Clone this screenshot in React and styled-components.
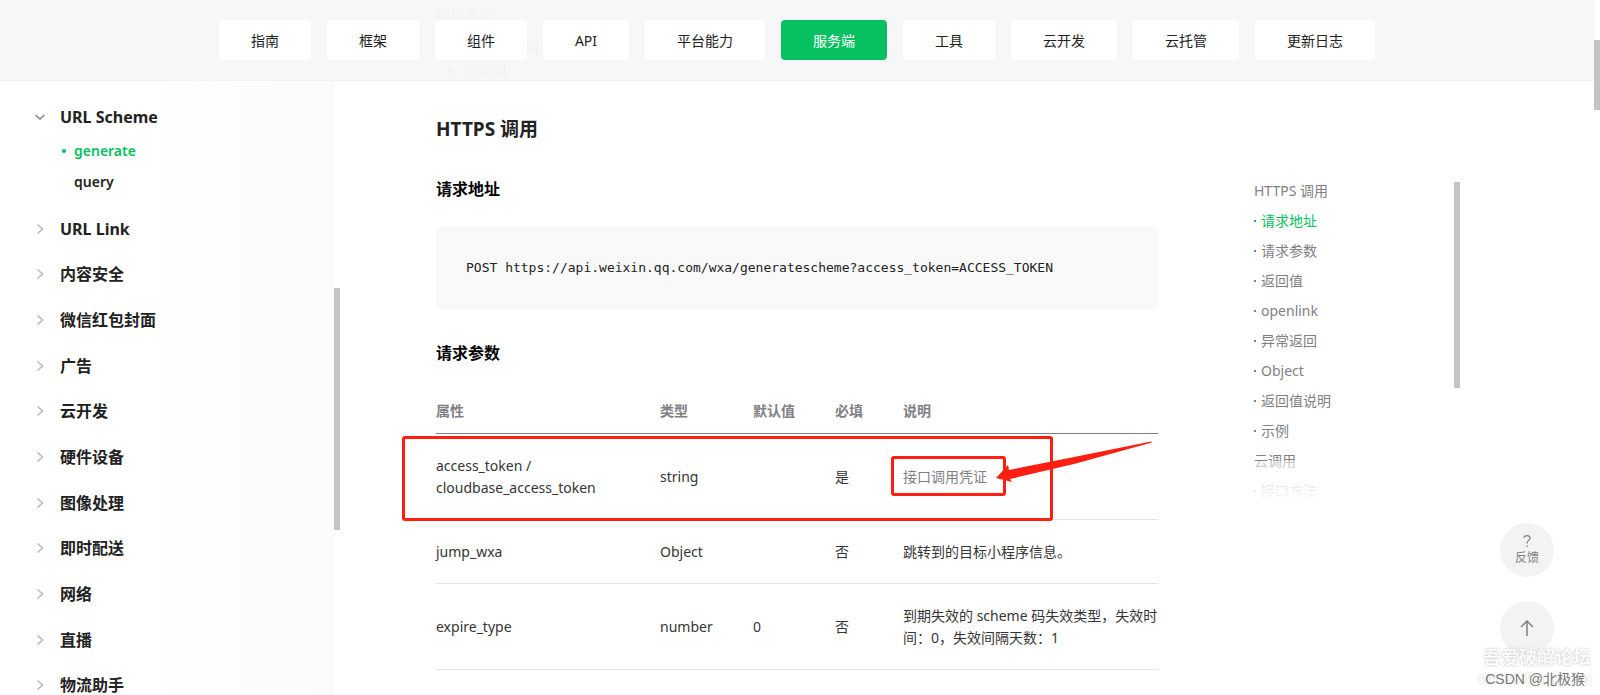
import React from 'react';
import styled, { createGlobalStyle } from 'styled-components';

const Global = createGlobalStyle`
  * { box-sizing: border-box; }
  html, body { margin: 0; height: 100%; overflow: hidden; }
  body {
    background: #fff;
    color: #353535;
    font-family: "Noto Sans", "Noto Sans CJK SC", sans-serif;
    font-size: 14px;
    line-height: 22px;
  }
  #root { height: 100%; }
  ul { list-style: none; margin: 0; padding: 0; }
  a { color: inherit; text-decoration: none; }
  button { font: inherit; border: 0; cursor: pointer; }
`;

const Page = styled.div`
  position: relative;
  height: 100vh;
  display: flex;
  flex-direction: column;
  overflow: hidden;
  padding-right: 6px;
`;

const Header = styled.header`
  position: relative;
  flex: none;
  display: flex;
  justify-content: center;
  padding: 20px 0;
  background: #f7f7f7;
  border-bottom: 1px solid #f2f2f2;
`;

const Tabs = styled.nav`
  position: relative;
  display: flex;
  gap: 16px;
`;

const Tab = styled.a`
  padding: 1px 32px 0;
  line-height: 39px;
  border-radius: 4px;
  color: ${(p) => (p.$active ? '#fff' : '#222')};
  background: ${(p) => (p.$active ? '#07c160' : '#fff')};
`;

const Underlay = styled.div`
  position: absolute;
  left: 436px;
  top: 1px;
  color: #f2f2f2;
  line-height: 28px;
  ul { list-style: disc; padding-left: 29px; }
  p { margin: 0; }
  li:first-child { line-height: 36px; }
  li:last-child { line-height: 12px; }
`;

const Body = styled.div`
  flex: 1;
  min-height: 0;
  display: flex;
`;

const Sidebar = styled.aside`
  flex: none;
  width: 340px;
  display: flex;
  overflow: hidden;
`;

const Tree = styled.nav`
  flex: 1;
  padding: 24px 0 0 37px;
  background: linear-gradient(90deg, #fff 0%, #fff 50%, #fdfdfd 50%, #fbfbfb 100%);
`;

const SideTrack = styled.div`
  width: 6px;
  padding-top: 207px;
`;

const Thumb = styled.div`
  width: 6px;
  height: ${(p) => p.$length}px;
  background: #c4c4c3;
`;

const TreeLink = styled.a`
  display: flex;
  align-items: center;
  gap: 15px;
  height: 24px;
  font-size: 16px;
  font-weight: 700;
  color: #222;
  svg { flex: none; margin-left: -2px; }
`;

const SubList = styled.ul`
  padding: 6px 0 9px 37px;
`;

const SubLink = styled.a`
  position: relative;
  display: block;
  line-height: 31px;
  font-weight: 600;
  color: ${(p) => (p.$active ? '#07c160' : '#222')};
  &::before {
    content: "";
    display: ${(p) => (p.$active ? 'block' : 'none')};
    position: absolute;
    left: -12px;
    top: 14px;
    width: 4px;
    height: 4px;
    border-radius: 2px;
    background: #07c160;
  }
`;

const Groups = styled.ul`
  display: grid;
  grid-auto-rows: 1fr;
  align-items: center;
  height: 502px;
`;

const Article = styled.main`
  flex: none;
  width: 722px;
  margin-left: 96px;
`;

const Title = styled.h2`
  margin: 34px 0 0;
  font-size: 19px;
  line-height: 28px;
  color: #222;
`;

const Subtitle = styled.h3`
  margin: 0;
  padding: ${(p) => p.$above}px 0 26px;
  font-size: 16px;
  line-height: 24px;
  color: #000;
`;

const Code = styled.pre`
  margin: 0;
  padding: 30px;
  background: #f9f9f9;
  border-radius: 4px;
  color: #222;
  font-family: "DejaVu Sans Mono", "Liberation Mono", monospace;
  font-size: 13px;
  line-height: 22px;
`;

const TableWrap = styled.div`
  position: relative;
`;

const Table = styled.table`
  width: 100%;
  table-layout: fixed;
  border-collapse: separate;
  border-spacing: 0;
  th, td { text-align: left; padding: 21px 0 20px; }
  th { padding: 9px 0 11px; color: #808084; border-bottom: 1px solid #808084; }
  td { border-bottom: 1px solid #e4e4e4; }
`;

const DocLink = styled.a`
  && { color: #808084; }
`;

const Frame = styled.div`
  position: absolute;
  left: ${(p) => p.$x}px;
  top: ${(p) => p.$y}px;
  width: ${(p) => p.$w}px;
  height: ${(p) => p.$h}px;
  border: 3px solid #ff1f12;
  border-radius: 3px;
  pointer-events: none;
`;

const Arrow = styled.svg`
  position: absolute;
  left: 558px;
  top: 46px;
  pointer-events: none;
`;

const Toc = styled.aside`
  position: relative;
  flex: none;
  display: flex;
  justify-content: space-between;
  width: 206px;
  height: 326px;
  margin: 95px 0 0 96px;
  overflow: hidden;
  &::after {
    content: "";
    position: absolute;
    left: 0;
    right: 6px;
    bottom: 0;
    height: 41px;
    background: linear-gradient(rgba(255, 255, 255, 0.5), #fff);
  }
`;

const TocTrack = styled.div`
  padding-top: 6px;
`;

const TocList = styled.ul`
  line-height: 30px;
  color: #808084;
`;

const TocLink = styled.a`
  display: flex;
  align-items: center;
  gap: 5px;
  color: ${(p) => (p.$active ? '#07c160' : '#808084')};
  &::before {
    content: "";
    display: ${(p) => (p.$sub ? 'block' : 'none')};
    width: 2px;
    height: 2px;
    background: currentColor;
  }
`;

const Scroll = styled.div`
  position: absolute;
  right: 0;
  top: 0;
  height: 100%;
  padding-top: 40px;
  background: #fff;
`;

const Floating = styled.div`
  position: absolute;
  right: 46px;
  top: 523px;
  display: flex;
  flex-direction: column;
  gap: 24px;
`;

const Round = styled.button`
  display: flex;
  flex-direction: column;
  align-items: center;
  justify-content: center;
  gap: 1px;
  width: 54px;
  height: 54px;
  padding: 0;
  border-radius: 50%;
  background: #f3f3f3;
  color: #808084;
  font-size: 12px;
  line-height: 18px;
`;

const Mark = styled.div`
  position: absolute;
  right: ${(p) => p.$right}px;
  bottom: ${(p) => p.$bottom}px;
  font-family: "Liberation Sans", "Noto Sans CJK SC", sans-serif;
  font-size: ${(p) => p.$size}px;
  font-weight: ${(p) => p.$weight || 400};
  line-height: 24px;
  white-space: nowrap;
  color: ${(p) => p.$color};
  text-shadow: ${(p) => p.$shadow};
`;

const tabs = ['指南', '框架', '组件', 'API', '平台能力', '服务端', '工具', '云开发', '云托管', '更新日志'];
const groups = ['URL Link', '内容安全', '微信红包封面', '广告', '云开发', '硬件设备', '图像处理', '即时配送', '网络', '直播', '物流助手'];
const toc = [
  ['HTTPS 调用', false], ['请求地址', true], ['请求参数', true], ['返回值', true], ['openlink', true], ['异常返回', true],
  ['Object', true], ['返回值说明', true], ['示例', true], ['云调用', false], ['接口方法', true],
];

const Chevron = ({ open }) => (
  <svg width="10" height="10" viewBox="0 0 10 10" fill="none" stroke={open ? '#808084' : '#b9b9b9'} strokeWidth="1.5">
    <path d={open ? 'M0.5 3L5 7L9.500 3' : 'M2.500 0.5L7.500 5L2.500 9.500'} />
  </svg>
);

export default function App() {
  return (
    <Page>
      <Global />
      <Header>
        <Underlay aria-hidden="true">
          <p>调用方式：</p>
          <ul><li>HTTPS 调用</li><li>云调用</li></ul>
        </Underlay>
        <Tabs>
          {tabs.map((t) => <Tab key={t} href="#" $active={t === '服务端'}>{t}</Tab>)}
        </Tabs>
      </Header>
      <Body>
        <Sidebar>
          <Tree>
            <TreeLink href="#"><Chevron open />URL Scheme</TreeLink>
            <SubList>
              <li><SubLink href="#" $active>generate</SubLink></li>
              <li><SubLink href="#">query</SubLink></li>
            </SubList>
            <Groups>
              {groups.map((g) => <li key={g}><TreeLink href="#"><Chevron />{g}</TreeLink></li>)}
            </Groups>
          </Tree>
          <SideTrack><Thumb $length={242} /></SideTrack>
        </Sidebar>
        <Article>
          <Title>HTTPS 调用</Title>
          <Subtitle $above={34}>请求地址</Subtitle>
          <Code>POST https://api.weixin.qq.com/wxa/generatescheme?access_token=ACCESS_TOKEN</Code>
          <Subtitle $above={32}>请求参数</Subtitle>
          <TableWrap>
            <Table>
              <colgroup>
                <col width="224" /><col width="93" /><col width="82" /><col width="68" /><col />
              </colgroup>
              <thead>
                <tr><th>属性</th><th>类型</th><th>默认值</th><th>必填</th><th>说明</th></tr>
              </thead>
              <tbody>
                <tr>
                  <td>access_token /<br />cloudbase_access_token</td><td>string</td><td /><td>是</td>
                  <td><DocLink href="#">接口调用凭证</DocLink></td>
                </tr>
                <tr><td>jump_wxa</td><td>Object</td><td /><td>否</td><td>跳转到的目标小程序信息。</td></tr>
                <tr>
                  <td>expire_type</td><td>number</td><td>0</td><td>否</td>
                  <td>到期失效的 scheme 码失效类型，失效时间：0，失效间隔天数：1</td>
                </tr>
              </tbody>
            </Table>
            <Frame $x={-34} $y={45} $w={651} $h={85} />
            <Frame $x={455} $y={65} $w={115} $h={40} />
            <Arrow width="160" height="46" viewBox="0 0 160 46" fill="#ff1f12">
              <path d="M2 41L14 28L15 33L70 22L157 4.500L158 5.500L80 27L16 42L18 45Z" />
            </Arrow>
          </TableWrap>
        </Article>
        <Toc>
          <TocList>
            {toc.map(([t, sub]) => <li key={t}><TocLink href="#" $sub={sub} $active={t === '请求地址'}>{t}</TocLink></li>)}
          </TocList>
          <TocTrack><Thumb $length={206} /></TocTrack>
        </Toc>
      </Body>
      <Scroll><Thumb $length={70} /></Scroll>
      <Floating>
        <Round>
          <svg width="10" height="14" viewBox="0 0 10 14" fill="none" stroke="currentColor" strokeWidth="1.3">
            <path d="M2 4C2 0.700 8 0.700 8 4C8 6.500 5 6.300 5 9.500M5 11.500V13" />
          </svg>
          反馈
        </Round>
        <Round aria-label="返回顶部">
          <svg width="16" height="18" viewBox="0 0 16 18" fill="none" stroke="currentColor" strokeWidth="1.5">
            <path d="M8 17V2M2 8L8 2L14 8" />
          </svg>
        </Round>
      </Floating>
      <Mark $right={9} $bottom={25} $size={18} $weight={500} $color="#fff" $shadow="0 0 3px #ccc, 0 0 3px #ddd">吾爱破解论坛</Mark>
      <Mark aria-hidden="true" $right={9} $bottom={5} $size={15} $weight={700} $color="#fff" $shadow="0 0 3px #ccc">www.52pojie.cn</Mark>
      <Mark $right={15} $bottom={4} $size={14} $color="#777" $shadow="0 0 2px #fff">CSDN @北极猴</Mark>
    </Page>
  );
}
